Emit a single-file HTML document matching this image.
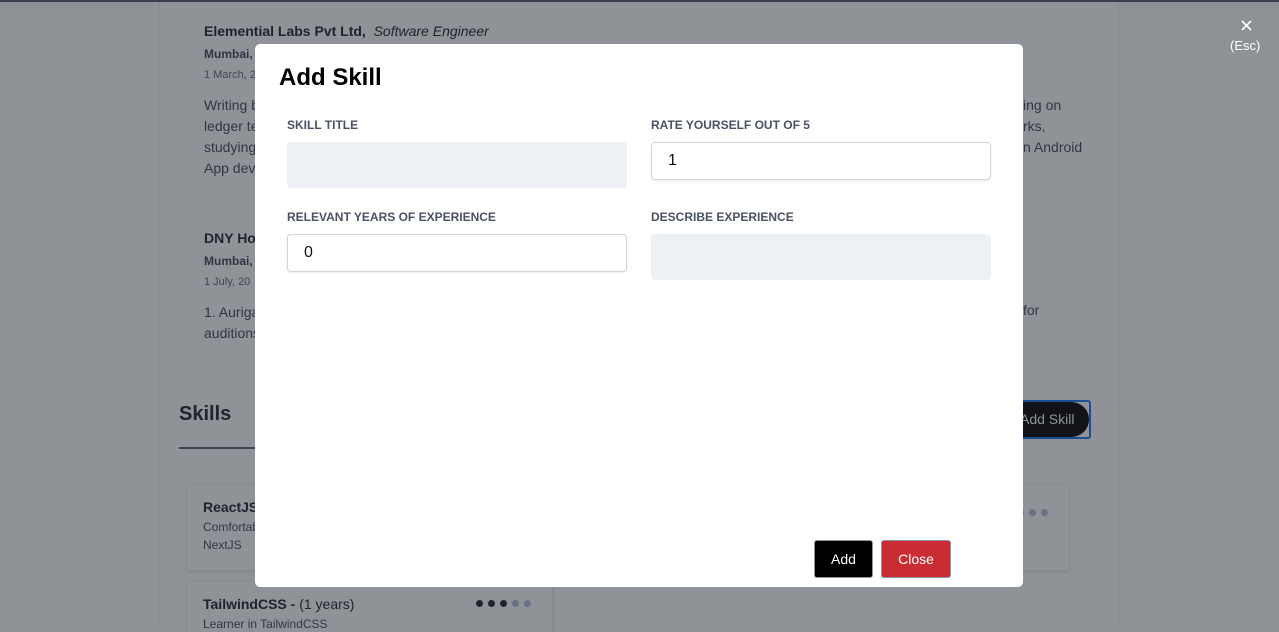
<!DOCTYPE html>
<html><head><meta charset="utf-8"><style>
*{box-sizing:border-box;margin:0;padding:0}
body{width:1279px;height:628px;overflow:hidden;background:#8e9196;font-family:"Liberation Sans",Arial,sans-serif;position:relative}
.topline{position:absolute;left:0;top:0;width:1279px;height:2px;background:#3a3d4f}
.card{position:absolute;left:159px;top:2px;width:960px;height:626px;background:#8f9297;border-left:1px solid #878a90;border-right:1px solid #878a90}
.t{position:absolute;color:#1f232c;white-space:nowrap}
.s{color:#2f3644}
.modal{position:absolute;left:255px;top:44px;width:768px;height:543px;background:#fff;border-radius:5px}
.lbl{position:absolute;font-size:12px;font-weight:bold;color:#4a5263;letter-spacing:0}
.fill{position:absolute;background:#edf1f5;border-radius:4px}
.inp{position:absolute;background:#fff;border:1px solid #cfd5de;border-radius:4px;box-shadow:0 1px 2px rgba(0,0,0,.08);font-size:16px;color:#111;padding:9px 0 0 16px}
.btn{position:absolute;color:#fff;font-size:14px;text-align:center;line-height:36px;border-radius:3px;border:1px solid #8c94a2}
.dots span{display:inline-block;width:7px;height:7px;border-radius:50%;margin-right:5px;background:#1e232e}
.dots span.g{background:#697284}
</style></head><body>
<div class="topline"></div>
<div class="card"></div>
<div class="t" style="left:204px;top:23px;font-size:14px;font-weight:bold">Elemential Labs Pvt Ltd, <i style="font-weight:normal">&nbsp;Software Engineer</i></div>
<div class="t s" style="left:204px;top:47px;font-size:12px;font-weight:bold">Mumbai,</div>
<div class="t" style="left:204px;top:69px;font-size:11px;color:#3f4655">1 March, 2</div>
<div class="t s" style="left:204px;top:95px;font-size:14px;line-height:21px">Writing b<br>ledger te<br>studying<br>App dev</div>
<div class="t s" style="left:1023px;top:95px;font-size:14px;line-height:21px">ing on<br>rks,<br>n Android</div>
<div class="t" style="left:204px;top:230px;font-size:14px;font-weight:bold">DNY Ho</div>
<div class="t s" style="left:204px;top:254px;font-size:12px;font-weight:bold">Mumbai,</div>
<div class="t" style="left:204px;top:276px;font-size:11px;color:#3f4655">1 July, 20</div>
<div class="t s" style="left:204px;top:302px;font-size:14px;line-height:21px">1. Auriga<br>auditions</div>
<div class="t s" style="left:1023px;top:302px;font-size:14px">for</div>
<div class="t" style="left:179px;top:403px;font-size:20px;font-weight:bold">Skills</div>
<div style="position:absolute;left:179px;top:447px;width:80px;height:2px;background:#3b4252"></div>
<div style="position:absolute;left:1000px;top:400px;width:91px;height:39px;border:2px solid #1d4e94;border-radius:3px"></div>
<div style="position:absolute;left:1000px;top:402px;width:89px;height:35px;background:#111318;border-radius:0 18px 18px 0"></div>
<div class="t" style="left:1020px;top:411px;font-size:14px;color:#8e9196">Add Skill</div>
<div style="position:absolute;left:187px;top:485px;width:882px;height:85px;background:#8f9297;box-shadow:0 1px 4px rgba(0,0,0,.12)"></div>
<div class="t" style="left:203px;top:499px;font-size:14px;font-weight:bold">ReactJS</div>
<div class="t s" style="left:203px;top:520px;font-size:12px">Comfortab</div>
<div class="t s" style="left:203px;top:538px;font-size:12px">NextJS</div>
<div class="dots" style="position:absolute;left:1017px;top:503px"><span class="g"></span><span class="g"></span><span class="g"></span></div>
<div style="position:absolute;left:187px;top:582px;width:365px;height:50px;background:#8f9297;box-shadow:0 1px 4px rgba(0,0,0,.12)"></div>
<div class="t" style="left:203px;top:596px;font-size:14px;font-weight:bold">TailwindCSS - <span style="font-weight:normal">(1 years)</span></div>
<div class="t s" style="left:203px;top:617px;font-size:12px">Learner in TailwindCSS</div>
<div class="dots" style="position:absolute;left:476px;top:594px"><span></span><span></span><span></span><span class="g"></span><span class="g"></span></div>
<svg style="position:absolute;left:1241px;top:20px" width="11" height="11" viewBox="0 0 11 11"><path d="M1 1L10 10M10 1L1 10" stroke="#fff" stroke-width="1.6"/></svg>
<div class="t" style="left:1230px;top:38px;font-size:13px;color:#fff">(Esc)</div>

<div class="modal">
<div class="t" style="left:24px;top:20px;font-size:24px;font-weight:bold;color:#000">Add Skill</div>
<div class="lbl" style="left:32px;top:74px">SKILL TITLE</div>
<div class="fill" style="left:32px;top:98px;width:340px;height:46px"></div>
<div class="lbl" style="left:396px;top:74px">RATE YOURSELF OUT OF 5</div>
<div class="inp" style="left:396px;top:98px;width:340px;height:38px">1</div>
<div class="lbl" style="left:32px;top:166px">RELEVANT YEARS OF EXPERIENCE</div>
<div class="inp" style="left:32px;top:190px;width:340px;height:38px">0</div>
<div class="lbl" style="left:396px;top:166px">DESCRIBE EXPERIENCE</div>
<div class="fill" style="left:396px;top:190px;width:340px;height:46px"></div>
<div class="btn" style="left:559px;top:496px;width:59px;height:38px;background:#000">Add</div>
<div class="btn" style="left:626px;top:496px;width:70px;height:38px;background:#c92c33">Close</div>
</div>
</body></html>
